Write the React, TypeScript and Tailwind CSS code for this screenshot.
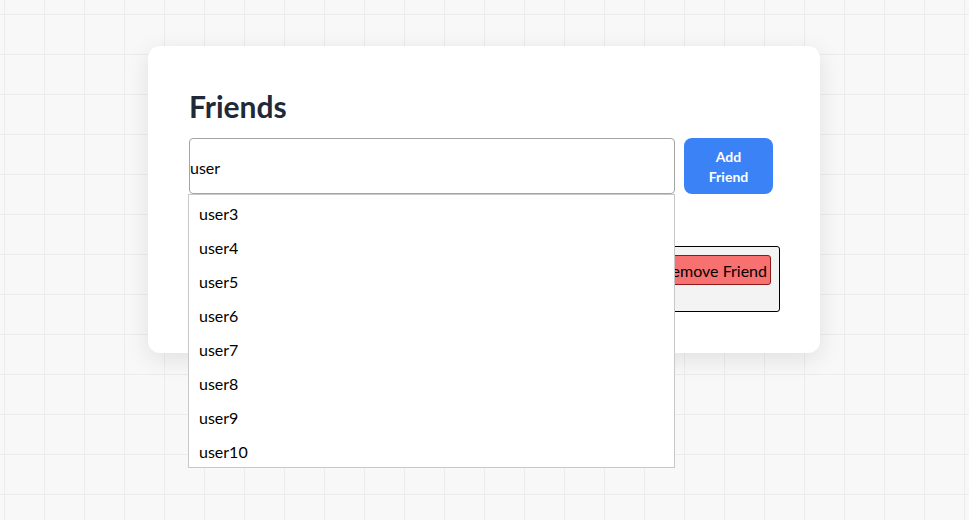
const suggestions = ["user3", "user4", "user5", "user6", "user7", "user8", "user9", "user10"];

export default function App() {
    return (
        <div
            className="min-h-[520px] w-full bg-[#f8f8f8] bg-[linear-gradient(to_right,#ececec_1px,transparent_1px),linear-gradient(to_bottom,#ececec_1px,transparent_1px)] bg-size-[40px_40px] bg-position-[4px_14px] pt-[46px] font-['Segoe_UI','Lato',sans-serif]"
        >
            <section className="ml-[148px] w-[672px] rounded-xl bg-white pl-[41px] pr-[40px] pt-[40px] pb-[41px] shadow-[0_6px_24px_rgba(0,0,0,0.1)]">
                <h1 className="text-[30px] leading-[40px] font-bold text-[#1f2937]">Friends</h1>
                <div className="relative mt-[12px] flex items-stretch gap-[9px]">
                    <div className="relative">
                        <input
                            defaultValue="user"
                            className="h-[56px] w-[486px] rounded-[4px] border border-[#a3a3a3] bg-white pt-[2px] text-[16px] text-black outline-none"
                        />
                        <ul className="absolute left-[-1px] top-[56px] z-10 w-[487px] border border-[#c8c8c8] bg-white">
                            {suggestions.map((s) => (
                                <li key={s} className="h-[34px] px-[10px] pt-[4px] text-[16px] leading-[30px] text-black">
                                    {s}
                                </li>
                            ))}
                        </ul>
                    </div>
                    <button className="w-[89px] rounded-lg bg-[#3b82f6] pt-[2px] text-[14px] leading-[20px] font-bold text-white">
                        Add
                        <br />
                        Friend
                    </button>
                </div>
                <ul className="mt-[52px]">
                    <li className="flex h-[66px] justify-end rounded-[3px] border border-black bg-[#f3f3f3] pt-[8px] pr-[8px]">
                        <button className="h-[30px] rounded-[3px] border border-[#8b1a1a] bg-[#f87171] pl-[6px] pr-[3px] pt-[2px] text-[16px] text-black">
                            Remove Friend
                        </button>
                    </li>
                </ul>
            </section>
        </div>
    );
}
